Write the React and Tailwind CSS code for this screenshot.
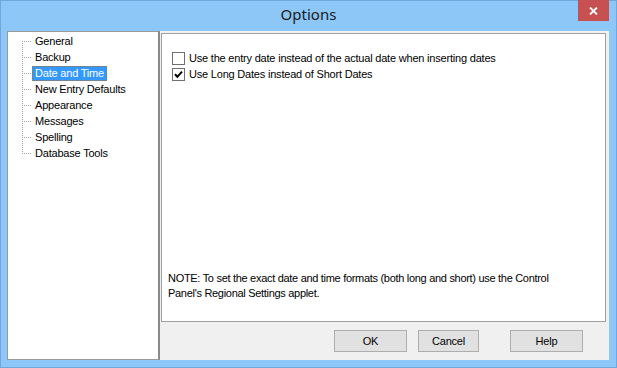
import React, { useState } from 'react';

const sections = [
  'General',
  'Backup',
  'Date and Time',
  'New Entry Defaults',
  'Appearance',
  'Messages',
  'Spelling',
  'Database Tools',
];

function TreeLines({ first, last }) {
  return (
    <svg width="10" height="16" className="shrink-0" shapeRendering="crispEdges">
      <line x1="0.5" y1={first ? 8 : 0} x2="0.5" y2={last ? 8 : 16} stroke="#a0a0a0" strokeDasharray="1 1" />
      <line x1="0" y1="8.5" x2="10" y2="8.5" stroke="#a0a0a0" strokeDasharray="1 1" />
    </svg>
  );
}

function CheckBox({ checked, label, onToggle }) {
  return (
    <div className="flex h-[16px] items-center cursor-default" onClick={onToggle}>
      <span className="flex h-[13px] w-[13px] shrink-0 items-center justify-center border border-[#707070] bg-white">
        {checked && (
          <svg width="9" height="9" viewBox="0 0 9 9">
            <path d="M1 4.2L3.4 6.8L8 1.6" fill="none" stroke="#000" strokeWidth="2" />
          </svg>
        )}
      </span>
      <span className="ml-[4px] whitespace-nowrap">{label}</span>
    </div>
  );
}

export default function App() {
  const [selected, setSelected] = useState('Date and Time');
  const [useEntryDate, setUseEntryDate] = useState(false);
  const [longDates, setLongDates] = useState(true);

  return (
    <div
      className="flex h-[368px] w-[617px] flex-col border border-[#6fa8dc] bg-[#8cc7f7] text-[11px] tracking-[-0.2px] text-black"
      style={{ fontFamily: '"Liberation Sans", Arial, sans-serif' }}
    >
      <div className="relative flex h-[30px] shrink-0 items-center justify-center pb-[3px]">
        <span className="text-[15px] tracking-normal text-[#1a1a1a]" style={{ fontFamily: '"Noto Sans", "Open Sans", sans-serif' }}>
          Options
        </span>
        <button className="absolute right-[7px] top-[-1px] flex h-[21px] w-[31px] items-center justify-center bg-[#c75050]">
          <svg width="9" height="8" viewBox="0 0 9 8">
            <path d="M1 0.5L8 7.5M8 0.5L1 7.5" stroke="#fff" strokeWidth="1.8" />
          </svg>
        </button>
      </div>

      <div className="ml-[6px] mr-[7px] flex h-[329px] shrink-0">
        <div className="w-[153px] shrink-0 border-l border-t border-b border-r-2 border-[#9a9a9a] border-r-[#8a8a8a] bg-white pl-[14px] pt-[1px]">
          {sections.map((s, i) => (
            <div key={s} className="flex h-[16px] items-center" onClick={() => setSelected(s)}>
              <TreeLines first={i === 0} last={i === sections.length - 1} />
              <span
                className={
                  s === selected
                    ? 'flex h-[15px] items-center whitespace-nowrap border border-dotted border-[#b07030] bg-[#3399ff] px-[2px] text-white'
                    : 'flex h-[15px] items-center whitespace-nowrap border border-transparent px-[2px]'
                }
              >
                {s}
              </span>
            </div>
          ))}
        </div>

        <div className="flex flex-1 flex-col bg-[#f0f0f0]">
          <div className="ml-[1px] mr-[3px] mt-[2px] flex h-[289px] flex-col border border-[#a0a0a0] bg-white">
            <div className="flex flex-col pl-[10px] pt-[16px]">
              <CheckBox
                checked={useEntryDate}
                onToggle={() => setUseEntryDate(!useEntryDate)}
                label="Use the entry date instead of the actual date when inserting dates"
              />
              <CheckBox
                checked={longDates}
                onToggle={() => setLongDates(!longDates)}
                label="Use Long Dates instead of Short Dates"
              />
            </div>
            <p className="mt-auto pb-[20px] pl-[6px] leading-[15px] tracking-[-0.3px]">
              NOTE: To set the exact date and time formats (both long and short) use the Control
              <br />
              Panel's Regional Settings applet.
            </p>
          </div>

          <div className="flex justify-end pr-[26px] pt-[8px]">
            <button className="h-[22px] w-[73px] border border-[#adadad] bg-[#e1e1e1]">OK</button>
            <button className="ml-[11px] h-[22px] w-[61px] border border-[#adadad] bg-[#e1e1e1]">Cancel</button>
            <button className="ml-[31px] h-[22px] w-[73px] border border-[#adadad] bg-[#e1e1e1]">Help</button>
          </div>
        </div>
      </div>
    </div>
  );
}
